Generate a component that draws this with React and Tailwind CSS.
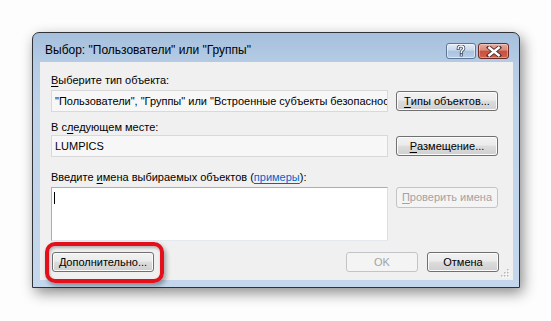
import React from 'react';

const font = { fontFamily: '"Liberation Sans", Arial, sans-serif' };

function Btn({ children, disabled, className = '' }) {
  return (
    <div
      className={`flex items-center justify-center rounded-[3px] border text-[11px] leading-none whitespace-nowrap ${
        disabled
          ? 'border-[#c2c4c6] bg-[#f4f4f4] text-[#a3a3a3]'
          : 'border-[#707070] bg-[linear-gradient(#f2f2f2_0%,#ebebeb_45%,#dddddd_50%,#cfcfcf_100%)] text-black shadow-[inset_0_0_0_1px_#fbfbfb]'
      } ${className}`}
    >
      {children}
    </div>
  );
}

function U({ children }) {
  return <span className="underline underline-offset-[2px] decoration-[1px]">{children}</span>;
}

function HelpButton() {
  return (
    <div className="w-[30px] h-[16px] rounded-[3px] border border-[#5f7796] bg-[linear-gradient(#e2ebf6_0%,#c8d9ed_45%,#a9c2e0_50%,#b9cfe8_100%)] flex items-center justify-center shadow-[inset_0_0_0_1px_rgba(255,255,255,0.5)]">
      <svg width="10" height="12" viewBox="0 0 10 12">
        <path d="M2.2 3.6 C2.2 1.6 3.6 1 5 1 C6.6 1 7.8 1.9 7.8 3.4 C7.8 5.2 5.3 5.4 5.3 7.2" fill="none" stroke="#3c4a5c" strokeWidth="3" strokeLinecap="square" />
        <rect x="3.8" y="8.6" width="3" height="2.8" fill="#3c4a5c" />
        <path d="M2.2 3.6 C2.2 1.6 3.6 1 5 1 C6.6 1 7.8 1.9 7.8 3.4 C7.8 5.2 5.3 5.4 5.3 7.2" fill="none" stroke="#ffffff" strokeWidth="1.4" strokeLinecap="square" />
        <rect x="4.6" y="9.3" width="1.5" height="1.4" fill="#ffffff" />
      </svg>
    </div>
  );
}

function CloseButton() {
  return (
    <div className="w-[31px] h-[16px] rounded-[3px] border border-[#6b2a24] bg-[linear-gradient(#e9a99a_0%,#d98876_45%,#c5503f_50%,#d4604c_100%)] flex items-center justify-center shadow-[inset_0_0_0_1px_rgba(255,255,255,0.35)]">
      <svg width="16" height="11" viewBox="0 0 16 11">
        <path d="M3 1.5 L13 9.5 M13 1.5 L3 9.5" stroke="#4a2a28" strokeWidth="4.2" strokeLinecap="square" />
        <path d="M3.3 1.8 L12.7 9.2 M12.7 1.8 L3.3 9.2" stroke="#ffffff" strokeWidth="2.4" strokeLinecap="square" />
      </svg>
    </div>
  );
}

function Grip() {
  const dots = [
    [6, 0],
    [3, 3], [6, 3],
    [0, 6], [3, 6], [6, 6],
  ];
  return (
    <svg width="9" height="9" viewBox="0 0 9 9">
      {dots.map(([x, y], i) => (
        <g key={i}>
          <rect x={x + 1} y={y + 1} width="1.5" height="1.5" fill="#ffffff" />
          <rect x={x} y={y} width="1.5" height="1.5" fill="#b8b8b8" />
        </g>
      ))}
    </svg>
  );
}

export default function App() {
  return (
    <div className="relative w-[551px] h-[321px] bg-[#fdfdfd] pl-[32px] pt-[32px] overflow-hidden" style={font}>
      <div className="w-[488px] h-[256px] rounded-t-[7px] border border-[#2f3237] bg-[linear-gradient(180deg,#a5bfdc_0%,#b6cce5_12%,#bfd3ea_30%,#c4d7ec_100%)] shadow-[3px_5px_14px_rgba(0,0,0,0.45)] flex flex-col">
        {/* title bar */}
        <div className="h-[29px] flex items-start pt-[10px] pl-[12px] pr-[10px]">
          <div className="flex-1 text-[12px] leading-[15px] text-black">
            Выбор: "Пользователи" или "Группы"
          </div>
          <div className="flex gap-[2px]">
            <HelpButton />
            <CloseButton />
          </div>
        </div>

        {/* client area */}
        <div className="ml-[7px] mr-[6px] h-[218px] bg-[#f0f0f0] pl-[11px] pr-[14px] pt-[10px] text-[11px] text-black relative">
          <div className="h-[18px] leading-[16px]">
            <U>В</U>ыберите тип объекта:
          </div>
          <div className="flex items-center gap-[8px] h-[22px]">
            <div className="w-[337px] shrink-0 h-[22px] border border-[#d9d9d9] bg-[#f7f7f7] pl-[3px] leading-[20px] whitespace-nowrap overflow-hidden">
              "Пользователи", "Группы" или "Встроенные субъекты безопасности"
            </div>
            <Btn className="w-[102px] h-[20px]">
              <U>Т</U>ипы объектов...
            </Btn>
          </div>

          <div className="mt-[7px] h-[16px] leading-[16px]">
            В с<U>л</U>едующем месте:
          </div>
          <div className="flex items-center gap-[8px] h-[22px]">
            <div className="w-[337px] shrink-0 h-[22px] border border-[#d9d9d9] bg-[#f7f7f7] pl-[3px] leading-[20px] whitespace-nowrap overflow-hidden">
              LUMPICS
            </div>
            <Btn className="w-[102px] h-[20px]">
              <U>Р</U>азмещение...
            </Btn>
          </div>

          <div className="mt-[12px] h-[18px] leading-[16px]">
            Введите <U>и</U>мена выбираемых объектов (
            <span className="text-[#0066cc] underline underline-offset-[2px]">примеры</span>):
          </div>
          <div className="flex items-start gap-[8px]">
            <div className="w-[337px] shrink-0 h-[54px] border border-t-[#abadb3] border-l-[#abadb3] border-r-[#dbdfe6] border-b-[#e3e9ef] bg-white pl-[2px] pt-[4px]">
              <div className="w-[1px] h-[12px] bg-black" />
            </div>
            <Btn disabled className="w-[102px] h-[21px]">
              <U>П</U>роверить имена
            </Btn>
          </div>

          <div className="mt-[11px] flex items-center h-[20px]">
            <Btn className="w-[102px] h-[20px] ml-[1px]">
              <U>Д</U>ополнительно...
            </Btn>
            <div className="flex-1" />
            <Btn disabled className="w-[72px] h-[20px]">
              OK
            </Btn>
            <Btn className="w-[72px] h-[20px] ml-[9px]">Отмена</Btn>
          </div>

          <div className="absolute right-[3px] bottom-[2px]">
            <Grip />
          </div>
        </div>
      </div>

      {/* red highlight around the button */}
      <div className="absolute left-[45px] top-[242px] w-[119px] h-[41px] rounded-[10px] border-[4px] border-[#e3101b] shadow-[2px_3px_5px_rgba(0,0,0,0.35),inset_1px_2px_3px_rgba(0,0,0,0.25)]" />
    </div>
  );
}
